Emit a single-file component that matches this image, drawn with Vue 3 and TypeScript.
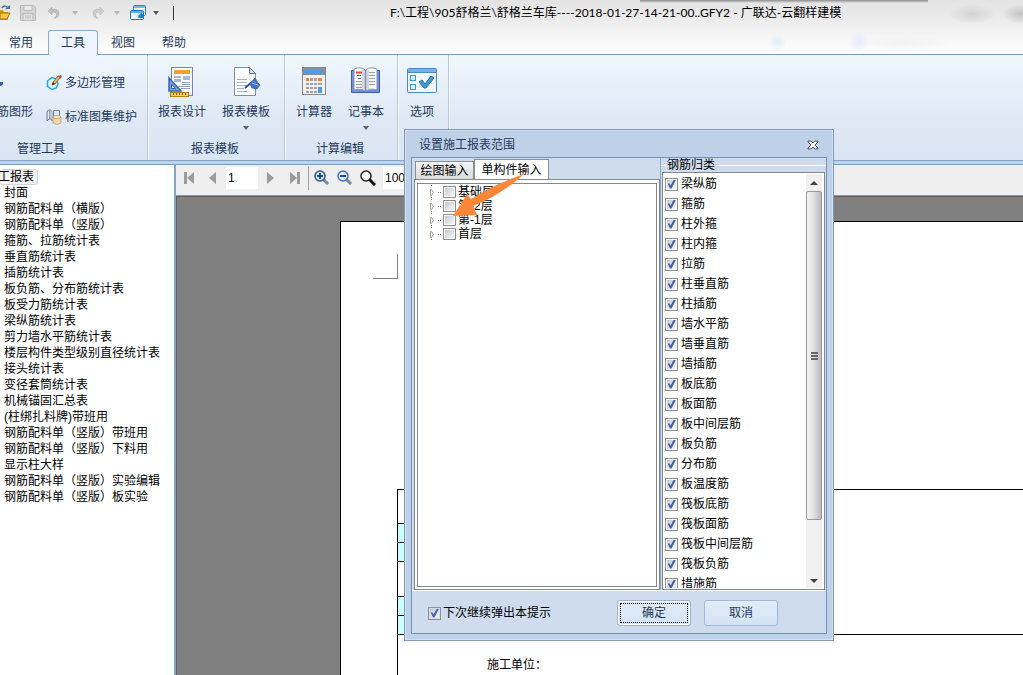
<script setup lang="ts">
import { ref } from 'vue'

interface Report { name: string }
interface Check { name: string; on: boolean }

const menuTabs: string[] = ['常用', '工具', '视图', '帮助']
const activeMenu = ref('工具')

const reports: Report[] = [
  '封面', '钢筋配料单（横版）', '钢筋配料单（竖版）', '箍筋、拉筋统计表', '垂直筋统计表',
  '插筋统计表', '板负筋、分布筋统计表', '板受力筋统计表', '梁纵筋统计表', '剪力墙水平筋统计表',
  '楼层构件类型级别直径统计表', '接头统计表', '变径套筒统计表', '机械锚固汇总表',
  '(柱绑扎料牌)带班用', '钢筋配料单（竖版）带班用', '钢筋配料单（竖版）下料用', '显示柱大样',
  '钢筋配料单（竖版）实验编辑', '钢筋配料单（竖版）板实验',
].map((name) => ({ name }))

const floors = ref<Check[]>(['基础层', '第-2层', '第-1层', '首层'].map((name) => ({ name, on: false })))

const kinds = ref<Check[]>([
  '梁纵筋', '箍筋', '柱外箍', '柱内箍', '拉筋', '柱垂直筋', '柱插筋', '墙水平筋', '墙垂直筋',
  '墙插筋', '板底筋', '板面筋', '板中间层筋', '板负筋', '分布筋', '板温度筋', '筏板底筋',
  '筏板面筋', '筏板中间层筋', '筏板负筋', '措施筋',
].map((name) => ({ name, on: true })))

const inputTab = ref('单构件输入')
const askAgain = ref(true)
const pageNo = ref('1')
const zoomLevel = ref('100%')
</script>

<template>
  <div class="app">
    <header class="titlebar">
      <div class="quick">
        <button class="q open" aria-label="打开">
          <svg width="12" height="16" viewBox="0 0 12 16"><path d="M0 5h3l1 2h4v8H0z" fill="#d99a1c" /><path d="M0 8h10l-3 6H0z" fill="#fbc94a" stroke="#a8700c" /><path d="M2 3c2-3 5-2 6 0" fill="none" stroke="#4a6f9c" stroke-width="1.5" /><path d="M5 4h5V0z" fill="#4a6f9c" /></svg>
        </button>
        <button class="q save" aria-label="保存">
          <svg width="16" height="16" viewBox="0 0 16 16" fill="none" stroke="#b9b9b9"><path d="M.5 .5h13l2 2v13H.5z" fill="#d5d5d5" /><path d="M4 .5h8v5H4z" fill="#e9e9e9" /><path d="M3 8.500h10v7H3z" fill="#e4e4e4" /><path d="M5 11h6M5 13h6" /></svg>
        </button>
        <button class="q undo" aria-label="撤销">
          <svg width="12" height="12" viewBox="0 0 12 12"><path d="M0 4l4-4v2.500c5-1 7 1 7 4S9 11 6 11.500c2-2 3-3 2.500-4.500C8 5.500 6 5 4 5.500V8z" fill="#bdbdbd" stroke="#aaa" stroke-width=".5" /></svg>
        </button>
        <svg class="drop" width="6" height="4"><path d="M0 0h6L3 4z" fill="#b4b4b4" /></svg>
        <button class="q redo" aria-label="恢复">
          <svg width="12" height="12" viewBox="0 0 12 12"><path d="M12 4L8 0v2.500c-5-1-7 1-7 4S3 11 6 11.500C4 9.500 3 8.500 3.500 7 4 5.500 6 5 8 5.500V8z" fill="#cfcfcf" stroke="#b4b4b4" stroke-width=".5" /></svg>
        </button>
        <svg class="drop" width="6" height="4"><path d="M0 0h6L3 4z" fill="#b4b4b4" /></svg>
        <button class="q wins" aria-label="切换窗口">
          <svg width="16" height="16" viewBox="0 0 16 16"><rect x="3.500" y=".5" width="12" height="10" rx="1" fill="#f4faff" stroke="#2b82cc" /><path d="M4 1h11v2H4z" fill="#6cb8f2" /><rect x=".5" y="5.500" width="13" height="9" rx="1" fill="#f0f8ff" stroke="#1d74c0" /><path d="M1 6h12v2H1z" fill="#58b0f2" /><path d="M5 9l3 2 3-3 2 1v4H7l2-1z" fill="#1689e0" /></svg>
        </button>
        <svg class="drop" width="6" height="4"><path d="M0 0h6L3 4z" fill="#555" /></svg>
        <span class="bar"></span>
      </div>
      <h1>F:\工程\905舒格兰\舒格兰车库----2018-01-27-14-21-00..GFY2 - 广联达-云翻样建模</h1>
    </header>

    <nav class="menu" role="tablist">
      <button v-for="t in menuTabs" :key="t" role="tab" :aria-selected="t === activeMenu" :class="{ active: t === activeMenu }" @click="activeMenu = t">{{ t }}</button>
    </nav>

    <section class="ribbon">
      <div class="group g1">
        <div class="tools">
          <button class="cut">
            <svg width="4" height="32" viewBox="0 0 4 32"><path d="M0 16h3v2l-2 2H0" fill="#3860a8" /></svg>
            <span>筋图形</span>
          </button>
          <div class="stack">
            <button class="small">
              <svg width="16" height="16" viewBox="0 0 16 16"><path d="M6 2.500L10.500 4l1.500 5-2 4-4 1.500-4.500-3V6z" fill="#e4f7ff" stroke="#23a5df" stroke-width="1.500" /><path d="M6 10l1-3 5-6 3 1-6 7z" fill="#e9b06a" stroke="#704824" stroke-width=".7" /><path d="M12 1l3-1 1 2-2 2z" fill="#b05c4c" /><path d="M6 10l1-3 2 2z" fill="#333" /></svg>
              <span>多边形管理</span>
            </button>
            <button class="small">
              <svg width="16" height="16" viewBox="0 0 16 16"><path d="M1 12V3q0-2 3-2v9q-2 0-3 2z" fill="#e8edf5" stroke="#64718b" /><path d="M4 1q2 0 2 3v8q0-2-2-2z" fill="#fff" stroke="#8591a8" /><path d="M7.500 1.500h6v8h-6z" fill="#dfe5ee" stroke="#72809a" /><path d="M7 8v6q4 3 8 0V8z" fill="#efd9a4" stroke="#b09255" stroke-width=".7" /><ellipse cx="11" cy="8" rx="4" ry="1.500" fill="#fff0c8" stroke="#b09255" stroke-width=".7" /></svg>
              <span>标准图集维护</span>
            </button>
          </div>
        </div>
        <div class="caption">管理工具</div>
      </div>

      <div class="group g2">
        <div class="tools">
          <button class="big">
            <svg width="32" height="32" viewBox="0 0 32 32"><rect x="5.500" y="1.500" width="21" height="28" fill="#fff" stroke="#6f87aa" /><path d="M8 4h16v4H8z" fill="#f5a02c" /><path d="M8 10h7v2H8zM8 13h7v3H8zM17 10h7v4h-7z" fill="#a9b8d2" /><path d="M16 16.500h8M16 18.500h8M12 20.500h12M15 22.500h9" stroke="#8fa2c2" /><path d="M3 12v13h12z" fill="#7fa4e0" stroke="#3a64b6" stroke-width="1.500" /><path d="M5.500 18v4.500h4z" fill="#fff" stroke="#325eae" /><rect x="4.500" y="26.500" width="18" height="4" fill="#f6cd59" stroke="#b38418" /><path d="M7.500 27v2M10.500 27v2M13.500 27v2M16.500 27v2M19.500 27v2" stroke="#7d5a0a" /></svg>
            <span>报表设计</span>
          </button>
          <button class="big">
            <svg width="32" height="32" viewBox="0 0 32 32"><path d="M4.500 1.500h15l6 6v22h-21z" fill="#fbfcff" stroke="#7b8eae" /><path d="M19.500 1.500v6h6z" fill="#dce5f2" stroke="#5b6e8e" /><path d="M7 13.500h10M7 16.500h10M7 19.500h10M7 22.500h7M7 25.500h10" stroke="#a6b2c6" /><path d="M15 22l7-6" stroke="#2c4c96" stroke-width="2" /><path d="M20 18l5-6 3 5 2 2-3 4-5-1z" fill="#4674ca" stroke="#3b5ca8" stroke-width=".8" /><path d="M22 17l6 2" stroke="#a7c4f4" /></svg>
            <span>报表模板</span>
            <svg class="drop" width="6" height="4"><path d="M0 0h6L3 4z" fill="#56616f" /></svg>
          </button>
        </div>
        <div class="caption">报表模板</div>
      </div>

      <div class="group g3">
        <div class="tools">
          <button class="big">
            <svg width="32" height="32" viewBox="0 0 32 32"><rect x="4.500" y="1.500" width="23" height="27" fill="#f1f1f2" stroke="#84868b" /><path d="M5 2h22v7H5z" fill="#8a8f98" /><rect x="7" y="4" width="18" height="4" fill="#4b9be8" /><path d="M8 12h3v3H8zM20 12h4v3h-4z" fill="#ef8235" /><path d="M12 12h3v3h-3zM16 12h3v3h-3zM8 17h3v2H8zM12 17h3v2h-3zM16 17h3v2h-3zM20 17h4v2h-4zM8 21h3v2H8zM12 21h3v2h-3zM16 21h3v2h-3zM8 25h3v2H8zM12 25h3v2h-3zM16 25h3v2h-3z" fill="#a1a1a4" /><path d="M20 21h4v6h-4z" fill="#4d9de2" /></svg>
            <span>计算器</span>
          </button>
          <button class="big">
            <svg width="32" height="32" viewBox="0 0 32 32"><path d="M1.500 4.500h28v22h-28z" fill="#6f90dc" stroke="#3c5ab0" /><path d="M4 3q7-3 11 1v21q-4-3-11-1zM27 3q-7-3-11 1v21q4-3 11-1z" fill="#fafafa" stroke="#8894a8" /><path d="M13 4v19M18 4v19" stroke="#d4d8df" stroke-width="2" /><path d="M6 6.500h6" stroke="#e23d36" stroke-width="2" /><path d="M7 9.500h4M8 12.500h3" stroke="#466fd0" /><path d="M6 15.500h6M6 18.500h6M6 21.500h6M19 6.500h6M19 9.500h6M19 12.500h6M19 15.500h6M19 18.500h6" stroke="#9aa0aa" /></svg>
            <span>记事本</span>
            <svg class="drop" width="6" height="4"><path d="M0 0h6L3 4z" fill="#56616f" /></svg>
          </button>
        </div>
        <div class="caption">计算编辑</div>
      </div>

      <div class="group g4">
        <div class="tools">
          <button class="big">
            <svg width="32" height="32" viewBox="0 0 32 32"><rect x="1.500" y="2.500" width="29" height="24" rx="1" fill="#f1f6fc" stroke="#4a88c8" /><path d="M2 3h28v3H2z" fill="#7ab0e6" /><path d="M2 6.500h28" stroke="#4a88c8" /><rect x="4.500" y="9.500" width="5" height="5" fill="#d5effb" stroke="#4a95c4" /><rect x="4.500" y="18.500" width="5" height="5" fill="#d5effb" stroke="#4a95c4" /><path d="M13 16l3-2 3 4 6-8 3 2-8 10h-2z" fill="#3d9cd0" stroke="#24709f" /></svg>
            <span>选项</span>
          </button>
        </div>
      </div>
    </section>

    <main class="work">
      <aside class="reports">
        <button class="root">工报表</button>
        <ul>
          <li v-for="r in reports" :key="r.name"><button>{{ r.name }}</button></li>
        </ul>
      </aside>

      <section class="preview">
        <div class="pager">
          <button aria-label="首页"><svg width="10" height="12"><path d="M0 0h3v12H0zM10 0v12L3 6z" fill="#9b9b9b" /></svg></button>
          <button aria-label="上一页"><svg width="10" height="12"><path d="M8 0v12L1 6z" fill="#9b9b9b" /></svg></button>
          <input v-model="pageNo" class="page" aria-label="页码" />
          <button aria-label="下一页"><svg width="10" height="12"><path d="M1 0v12l7-6z" fill="#9b9b9b" /></svg></button>
          <button aria-label="末页"><svg width="10" height="12"><path d="M0 0v12l7-6zM7 0h3v12H7z" fill="#9b9b9b" /></svg></button>
          <span class="rule"></span>
          <button aria-label="放大"><svg width="16" height="16"><path d="M9 9l5 5" stroke="#7788a8" stroke-width="3" /><circle cx="6" cy="6" r="5" fill="#e8f3ff" stroke="#24509c" stroke-width="1.500" /><path d="M3 6h6M6 3v6" stroke="#1c489c" stroke-width="2" /></svg></button>
          <button aria-label="缩小"><svg width="16" height="16"><path d="M9 9l5 5" stroke="#7788a8" stroke-width="3" /><circle cx="6" cy="6" r="5" fill="#dbeaff" stroke="#4a70b4" stroke-width="1.500" /><path d="M3 6h6" stroke="#1c489c" stroke-width="2" /></svg></button>
          <button aria-label="缩放"><svg width="16" height="16"><path d="M9 9l6 6" stroke="#111" stroke-width="3" /><circle cx="6" cy="6" r="5" fill="#fff" stroke="#222" stroke-width="1.500" /></svg></button>
          <input v-model="zoomLevel" class="zoom" aria-label="显示比例" />
        </div>
        <div class="canvas">
          <div class="paper">
            <div class="corner"></div>
            <table>
              <tbody>
                <tr class="tall"><td></td><td rowspan="6"></td></tr>
                <tr class="tint"><td></td></tr>
                <tr class="tint"><td></td></tr>
                <tr class="tall"><td></td></tr>
                <tr class="tint"><td></td></tr>
                <tr class="tint"><td></td></tr>
                <tr class="sign"><td colspan="2">施工单位：</td></tr>
              </tbody>
            </table>
          </div>
        </div>
      </section>
    </main>

    <div class="dialog" role="dialog" aria-labelledby="dlg-title">
      <div class="dlg-head">
        <h2 id="dlg-title">设置施工报表范围</h2>
        <button aria-label="关闭"><svg width="12" height="10" viewBox="0 0 12 10"><path d="M1 1h3l2 2 2-2h3v1L8 5l3 3v1H8L6 7 4 9H1V8l3-3-3-3z" fill="#fff" stroke="#46566c" /></svg></button>
      </div>
      <div class="frame">
        <div class="panes">
          <div class="left">
            <div class="tabs" role="tablist">
              <button v-for="t in ['绘图输入', '单构件输入']" :key="t" role="tab" :aria-selected="t === inputTab" :class="{ active: t === inputTab }" @click="inputTab = t">{{ t }}</button>
            </div>
            <div class="pane">
              <ul class="tree">
                <li v-for="f in floors" :key="f.name">
                  <svg class="twist" width="12" height="14"><path d="M1.500 4.500v6h1l2-3-2-3z" fill="#fff" stroke="#9a9a9a" /><path d="M9 7.500h1M11 7.500h1M2.500 0v1M2.500 12v1" stroke="#777" /></svg>
                  <label><input v-model="f.on" type="checkbox" />{{ f.name }}</label>
                </li>
              </ul>
            </div>
          </div>
          <fieldset>
            <legend>钢筋归类</legend>
            <div class="list">
              <ul>
                <li v-for="k in kinds" :key="k.name"><label><input v-model="k.on" type="checkbox" />{{ k.name }}</label></li>
              </ul>
              <div class="scroll">
                <svg width="15" height="17"><path d="M4 11h8L8 7z" fill="#404040" /></svg>
                <div class="thumb"><i></i><i></i><i></i></div>
                <svg width="15" height="17"><path d="M4 8h8l-4 4z" fill="#404040" /></svg>
              </div>
            </div>
          </fieldset>
        </div>
        <footer>
          <label><input v-model="askAgain" type="checkbox" />下次继续弹出本提示</label>
          <button class="ok"><span>确定</span></button>
          <button class="cancel">取消</button>
        </footer>
      </div>
      <svg class="arrow" width="72" height="44" viewBox="0 0 72 44"><path d="M0 43L14 21l4 5Q42 11 71 1 48 22 20 33l4 9z" fill="#fb8737" /></svg>
    </div>
  </div>
</template>

<style>
html, body { margin: 0; overflow: hidden; }
</style>

<style scoped>
* { box-sizing: border-box; }
.app { position: relative; display: flex; flex-direction: column; height: 100vh; overflow: hidden; font: 12px/16px "Liberation Sans", "Noto Sans CJK SC", sans-serif; color: #000;
  background: radial-gradient(ellipse 24px 10px at 972px 14px, #d2d2d2, transparent), radial-gradient(ellipse 18px 10px at 1020px 14px, #c4c4c4, transparent), radial-gradient(circle 9px at 778px 42px, #e2eef9, transparent), radial-gradient(circle 10px at 859px 42px, #e6e9fc, transparent), radial-gradient(ellipse 45px 8px at 905px 42px, #f2f2f2, transparent), linear-gradient(#e3e3e3, #ececec 20px, #fff 54px); }
button { margin: 0; padding: 0; border: 0; background: none; font: inherit; color: inherit; white-space: nowrap; }
svg { display: block; flex: none; }
ul { margin: 0; padding: 0; list-style: none; }
h1, h2 { margin: 0; font-size: 12px; font-weight: 400; white-space: nowrap; }
h1 { font-family: Lato, "Noto Sans CJK SC", sans-serif; }

.titlebar { display: flex; flex: none; align-items: center; height: 30px; padding-bottom: 4px;
  background: linear-gradient(#8c8c8c, transparent) 640px 0 / 288px 3px no-repeat; }
.quick { display: flex; align-items: center; width: 390px; }
.save { margin-left: 8px; }
.undo { margin-left: 12px; }
.undo + .drop { margin-left: 12px; }
.redo { margin-left: 14px; }
.redo + .drop { margin-left: 10px; }
.wins { margin-left: 10px; }
.wins + .drop { margin-left: 7px; }
.bar { width: 1px; height: 14px; margin-left: 14px; background: #333; }

.menu { display: flex; flex: none; height: 25px; padding-left: 0; border-bottom: 1px solid #7d9bc1; color: #1e395b; }
.menu button { width: 50px; height: 25px; }
.menu button:first-child { width: 48px; padding-right: 6px; }
.menu button:last-child { width: 52px; }
.menu .active { border: 1px solid #8ba7cc; border-bottom: 0; border-radius: 3px 3px 0 0; background: #eef5fd; }

.ribbon { display: flex; flex: none; height: 106px; border-bottom: 1px solid #8ba0bd; background: linear-gradient(#eff7fe, #dfe9f5 60%, #d9e5f3); color: #1e395b; }
.group { display: flex; flex-direction: column; justify-content: space-between; padding: 11px 0 3px; border-right: 1px solid #b5c8df; box-shadow: 1px 0 #f5faff; }
.g1 { width: 148px; }
.g2 { width: 137px; }
.g3 { width: 113px; }
.g4 { width: 51px; }
.tools { display: flex; }
.g2 .tools { padding-left: 2px; }
.g3 .tools { padding-left: 3px; }
.caption { text-align: center; }
.g1 .caption { width: 82px; }
.g2 .caption, .g3 .caption { padding-right: 2px; }
.big { display: flex; flex-direction: column; align-items: center; width: 64px; }
.g3 .big { width: 52px; }
.g4 .big { width: 48px; }
.big span { margin-top: 6px; }
.big .drop { margin-top: 6px; }
.cut { display: flex; flex-direction: column; align-items: flex-start; width: 33px; }
.cut span { display: flex; justify-content: flex-end; width: 33px; margin-top: 6px; }
.stack { display: flex; flex-direction: column; gap: 18px; padding: 9px 0 0 13px; }
.small { display: flex; align-items: center; gap: 3px; }

.work { display: flex; flex: 1; min-height: 0; margin-top: 3px; border-top: 1px solid #7d9bc1; background: #fff; box-shadow: 0 -3px #c0d3ea; }
.reports { flex: none; width: 174px; padding-top: 4px; overflow: hidden; background: #fff; }
.root { display: flex; justify-content: flex-end; width: 38px; height: 16px; padding-right: 3px; border: 1px solid #d4d4d4; border-left: 0; border-radius: 3px; background: #f3f3f3; line-height: 14px; }
.reports li { height: 16px; padding-left: 4px; }
.reports li button { display: block; }

.preview { display: flex; flex: 1; flex-direction: column; min-width: 0; border-left: 2px solid #85a2c8; }
.pager { display: flex; flex: none; align-items: center; height: 31px; padding: 0 0 4px 8px; border-bottom: 1px solid #7d9bc1; background: #efefef; }
.pager button + button { margin-left: 14px; }
.pager input { height: 22px; padding: 0 2px; border: 0; background: #fff; font: 12px/16px "Liberation Sans", sans-serif; }
.pager .page { width: 32px; margin: 0 8px; }
.rule { width: 1px; height: 24px; margin: 0 5px 0 8px; background: #a0a0a0; }
.rule ~ button + button { margin-left: 7px; }
.pager .zoom { width: 70px; margin-left: 7px; }
.canvas { flex: 1; min-height: 0; padding: 25px 0 0 164px; background: #808080; box-shadow: inset 1px 1px #606060; overflow: hidden; }
.paper { height: 100%; padding: 32px 0 0 32px; border: solid #000; border-width: 1px 0 0 1px; background: #fff; }
.corner { width: 25px; height: 25px; border: solid #808080; border-width: 0 1px 1px 0; }
table { width: calc(100% - 24px); margin: 210px 0 0 24px; border-collapse: collapse; table-layout: fixed; }
td { height: 19px; padding: 0; border: 1px solid #000; border-right: 0; }
td:first-child { width: 40px; }
.tint td { background: #ccffff; }
.tall td { height: 34px; }
.tall:nth-child(4) td { height: 35px; }
.sign td { height: 60px; padding-left: 89px; border-bottom: 0; }

.dialog { position: absolute; top: 129px; left: 404px; display: flex; flex-direction: column; width: 430px; height: 512px; padding: 0 6px 6px; border: 1px solid #8496b4; background: #bfd1e9; box-shadow: inset 0 0 0 1px #d3e1f3; }
.dlg-head { display: flex; align-items: center; justify-content: space-between; height: 27px; padding: 3px 8px 0 8px; color: #1e395b; }
.frame { display: flex; flex: 1; flex-direction: column; min-height: 0; border: 1px solid #7491b7; background: #cfdcee; }
.panes { display: flex; flex: 1; min-height: 0; }
.left { display: flex; flex-direction: column; width: 249px; padding: 0 0 0 2px; border-right: 1px solid #8ba7cc; }
.tabs { display: flex; align-items: flex-end; height: 21px; padding-left: 1px; }
.tabs button { width: 59px; height: 18px; border: 1px solid #8b8f96; border-bottom: 0; background: linear-gradient(#f4f4f4, #dadada); }
.tabs .active { width: 75px; height: 20px; background: #fff; }
.pane { flex: 1; min-height: 0; padding: 3px 2px 2px; border: 1px solid #828790; background: #fff; }
.tree { height: 100%; padding: 1px 0 0 11px; border: 1px solid #828790; }
.tree li { display: flex; align-items: center; height: 14px; }
.tree label, .list label, footer label { display: flex; align-items: center; gap: 2px; }
.tree label { margin-left: 2px; line-height: 14px; }
input[type="checkbox"] { flex: none; appearance: none; width: 13px; height: 13px; margin: 0; border: 1px solid #8e8f8f; background: linear-gradient(135deg, #c5cad1, #f6f6f6) content-box #f4f4f4; padding: 1px; }
.tree input[type="checkbox"] { height: 12px; }
input[type="checkbox"]:checked::before { content: ""; display: block; width: 9px; height: 9px; background: #4560a8; clip-path: polygon(8% 44%, 28% 44%, 40% 66%, 76% 0, 100% 0, 50% 100%, 34% 100%); }

fieldset { display: flex; flex: 1; flex-direction: column; min-width: 0; min-height: 0; margin: 0; padding: 0; border: solid #fff; border-width: 1px 0 0; }
legend { height: 14px; margin-left: 5px; padding: 0 1px; line-height: 14px; }
.list { display: flex; flex: 1; min-height: 0; margin: 0 1px 0 1px; padding: 1px; border: 1px solid #828790; background: #fff; overflow: hidden; }
.list ul { flex: 1; height: 100%; overflow: hidden; padding-left: 1px; }
.list li { display: flex; align-items: center; height: 20px; }
.list label { gap: 3px; }
.scroll { display: flex; flex-direction: column; width: 16px; margin-right: 1px; background: #f0f0f0; }
.thumb { display: flex; flex-direction: column; align-items: center; justify-content: center; gap: 1px; height: 329px; margin-bottom: auto; border: 1px solid #979797; border-radius: 2px; background: linear-gradient(90deg, #f5f5f5, #e4e4e4 40%, #bdbdc2); }
.thumb i { width: 7px; height: 2px; background: #666; }

footer { display: flex; flex: none; align-items: center; height: 43px; padding: 2px 0 0 16px; border-top: 1px solid #fff; }
footer button { width: 74px; height: 26px; border: 1px solid #a3b9d8; border-radius: 3px; background: linear-gradient(#e2ecf8, #d3e3f4); color: #1e395b; }
footer .ok { margin: 0 13px 0 auto; padding: 2px; border-color: #9db3d0; box-shadow: inset 0 0 0 1px #fff; }
.ok span { display: block; border: 1px dotted #000; line-height: 18px; }
footer .cancel { margin-right: 48px; }
.arrow { position: absolute; top: 43px; left: 48px; }
</style>
